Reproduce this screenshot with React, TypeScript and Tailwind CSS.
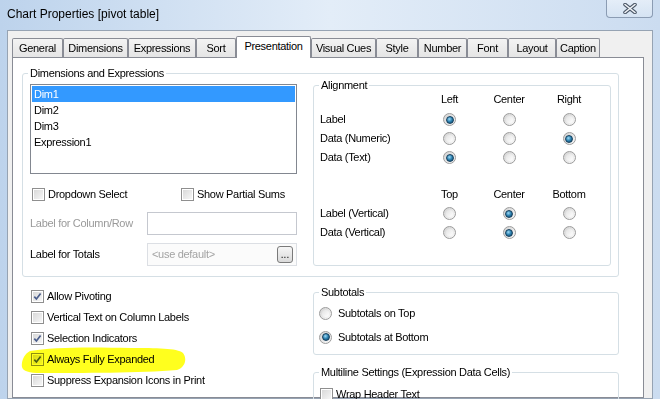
import type { ReactNode } from 'react';

const TABS: [string, number][] = [
  ['General', 51],
  ['Dimensions', 65],
  ['Expressions', 68],
  ['Sort', 40],
  ['Presentation', 75],
  ['Visual Cues', 65],
  ['Style', 42],
  ['Number', 49],
  ['Font', 41],
  ['Layout', 48],
  ['Caption', 44],
];

function Radio({ on }: { on?: boolean }) {
  return (
    <span className="w-[13px] h-[13px] rounded-full border border-[#9c9c9c] bg-linear-to-br from-[#d2d2d2] to-[#fbfbfb] flex items-center justify-center shrink-0">
      {on ? (
        <span className="w-[8px] h-[8px] rounded-full border border-[#163f5c] bg-[radial-gradient(circle_at_40%_35%,#9ddaf7,#2a7fae_50%,#0f3f60)]" />
      ) : (
        <span className="w-[7px] h-[7px] rounded-full bg-linear-to-br from-[#e2e2e2] to-[#ffffff]" />
      )}
    </span>
  );
}

function Check({ on }: { on?: boolean }) {
  return (
    <span className="w-[13px] h-[13px] border border-[#8f8f8f] bg-white p-[1px] flex shrink-0">
      <span className="flex-1 bg-linear-to-br from-[#d9d9d9] to-[#f6f6f6] flex items-center justify-center">
        {on && (
          <svg width="9" height="9" viewBox="0 0 9 9">
            <path d="M1.3 4.6 L3.4 7 L7.6 1.4" fill="none" stroke="#4b5e8c" strokeWidth="1.7" />
          </svg>
        )}
      </span>
    </span>
  );
}

function CheckLabel({ on, label, className = '' }: { on?: boolean; label: string; className?: string }) {
  return (
    <div className={`flex items-center gap-[3px] ${className}`}>
      <Check on={on} />
      <span className="relative">{label}</span>
    </div>
  );
}

function Group({ title, className, children }: { title: string; className: string; children?: ReactNode }) {
  return (
    <fieldset className={`border border-[#d5dfe5] rounded-[3px] ${className}`}>
      <legend className="ml-[5px] px-[2px] leading-[12px]">{title}</legend>
      {children}
    </fieldset>
  );
}

function CloseButton() {
  return (
    <div className="ml-auto mr-[7px] w-[47px] h-[18px] rounded-b-[4px] border border-t-0 border-[#8b9cb3] bg-linear-to-b from-[#eef4fb]/70 to-[#d9e6f4]/70 flex items-center justify-center">
      <svg width="14" height="11" viewBox="0 0 14 11">
        <path d="M2 1.5 L12 9.5 M12 1.5 L2 9.5" stroke="#4c5868" strokeWidth="3.6" strokeLinecap="round" />
        <path d="M2 1.5 L12 9.5 M12 1.5 L2 9.5" stroke="#f3f6fa" strokeWidth="1.6" strokeLinecap="round" />
      </svg>
    </div>
  );
}

const ALIGN_COLS = 'grid grid-cols-[106px_59px_60px_60px] items-center';

export default function App() {
  return (
    <div className="w-[660px] h-[399px] overflow-hidden flex flex-col bg-linear-to-r from-[#bdd3ec] via-[#e3edf8] to-[#cbdcf0] font-['Liberation_Sans',Arial,sans-serif] text-[11px] tracking-[-0.3px] text-black">
      {/* title bar */}
      <div className="h-[30px] shrink-0 flex items-start">
        <div className="pl-[7px] pt-[8px] text-[12px] leading-[12px] tracking-normal">Chart Properties [pivot table]</div>
        <CloseButton />
      </div>

      {/* client area */}
      <div className="flex-1 min-h-0 mx-[7px] border border-[#96a3b3] bg-[#f0f0f0] pt-[5px] pl-[4px] pr-[8px] flex flex-col">
        <div className="flex items-end shrink-0">
          {TABS.map(([name, w]) =>
            name === 'Presentation' ? (
              <div
                key={name}
                style={{ width: w }}
                className="h-[22px] -mb-px relative z-10 border border-b-0 border-[#898c95] rounded-t-[2px] bg-white flex items-center justify-center pb-[3px]"
              >
                {name}
              </div>
            ) : (
              <div
                key={name}
                style={{ width: w }}
                className="h-[19px] border border-b-0 border-[#898c95] rounded-t-[2px] bg-linear-to-b from-[#f3f3f3] to-[#e5e5e5] flex items-center justify-center"
              >
                {name}
              </div>
            )
          )}
        </div>

        <div className="flex-1 min-h-0 border border-[#898c95] bg-white">
          {/* Dimensions and Expressions */}
          <Group title="Dimensions and Expressions" className="ml-[9px] mt-[9px] w-[597px] h-[210px]">
            <div className="flex">
              <div className="ml-[7px] w-[267px]">
                <div className="mt-[5px] h-[90px] border border-[#828790] bg-white p-[1px]">
                  <div className="h-[16px] leading-[16px] px-[2px] bg-[#3399ff] text-white">Dim1</div>
                  <div className="h-[16px] leading-[16px] px-[2px]">Dim2</div>
                  <div className="h-[16px] leading-[16px] px-[2px]">Dim3</div>
                  <div className="h-[16px] leading-[16px] px-[2px]">Expression1</div>
                </div>

                <div className="mt-[14px] h-[13px] flex items-center pl-[2px]">
                  <CheckLabel label="Dropdown Select" className="w-[149px]" />
                  <CheckLabel label="Show Partial Sums" />
                </div>

                <div className="mt-[11px] h-[23px] flex items-center">
                  <span className="w-[117px] text-[#9a9a9a]">Label for Column/Row</span>
                  <div className="w-[150px] h-[23px] border border-[#c5c8cf] bg-white" />
                </div>

                <div className="mt-[8px] h-[23px] flex items-center">
                  <span className="w-[117px]">Label for Totals</span>
                  <div className="w-[150px] h-[23px] border border-[#dcdfe4] bg-[#fbfbfb] flex items-center pl-[4px] pr-[3px]">
                    <span className="flex-1 text-[#a3a3a3]">&lt;use default&gt;</span>
                    <div className="w-[16px] h-[17px] rounded-[3px] border border-[#7a7a7a] bg-linear-to-b from-[#f6f6f6] to-[#dadada] flex items-end justify-center leading-[10px] pb-[2px] text-[10px] tracking-normal">
                      ...
                    </div>
                  </div>
                </div>
              </div>

              <Group title="Alignment" className="ml-[16px] w-[298px] h-[187px]">
                <div className={`${ALIGN_COLS} h-[14px]`}>
                  <span />
                  <span className="text-center">Left</span>
                  <span className="text-center">Center</span>
                  <span className="text-center">Right</span>
                </div>
                <div className="mt-[5px]">
                  {[
                    ['Label', 0],
                    ['Data (Numeric)', 2],
                    ['Data (Text)', 0],
                  ].map(([label, sel]) => (
                    <div key={label} className={`${ALIGN_COLS} h-[19px]`}>
                      <span className="pl-[6px]">{label}</span>
                      {[0, 1, 2].map((i) => (
                        <span key={i} className="flex justify-center">
                          <Radio on={i === sel} />
                        </span>
                      ))}
                    </div>
                  ))}
                </div>

                <div className={`${ALIGN_COLS} h-[14px] mt-[19px]`}>
                  <span />
                  <span className="text-center">Top</span>
                  <span className="text-center">Center</span>
                  <span className="text-center">Bottom</span>
                </div>
                <div className="mt-[4px]">
                  {['Label (Vertical)', 'Data (Vertical)'].map((label) => (
                    <div key={label} className={`${ALIGN_COLS} h-[19px]`}>
                      <span className="pl-[6px]">{label}</span>
                      {[0, 1, 2].map((i) => (
                        <span key={i} className="flex justify-center">
                          <Radio on={i === 1} />
                        </span>
                      ))}
                    </div>
                  ))}
                </div>
              </Group>
            </div>
          </Group>

          {/* lower part */}
          <div className="flex">
            <div className="relative w-[300px] pl-[18px] pt-[9px]">
              <svg
                className="absolute left-[8px] top-[69px] mix-blend-multiply"
                width="166"
                height="28"
                viewBox="0 0 166 28"
              >
                <path
                  d="M9 5 C30 1 70 1 110 2 C135 2 156 2 162 7 C166 12 165 21 156 24 C120 27 60 27 20 27 C8 27 2 25 1 21 C0 16 3 8 9 5 Z"
                  fill="#ffff1e"
                />
              </svg>
              <CheckLabel on label="Allow Pivoting" className="h-[21px]" />
              <CheckLabel label="Vertical Text on Column Labels" className="h-[21px]" />
              <CheckLabel on label="Selection Indicators" className="h-[21px]" />
              <CheckLabel on label="Always Fully Expanded" className="h-[21px]" />
              <CheckLabel label="Suppress Expansion Icons in Print" className="h-[21px]" />
            </div>

            <div className="pt-[9px]">
              <Group title="Subtotals" className="w-[306px] h-[69px]">
                <div className="pl-[5px] pt-[3px]">
                  <div className="h-[24px] flex items-center gap-[6px]">
                    <Radio />
                    <span>Subtotals on Top</span>
                  </div>
                  <div className="h-[24px] flex items-center gap-[6px]">
                    <Radio on />
                    <span>Subtotals at Bottom</span>
                  </div>
                </div>
              </Group>
              <Group title="Multiline Settings (Expression Data Cells)" className="mt-[11px] w-[306px] h-[80px]">
                <div className="pl-[6px] pt-[10px]">
                  <CheckLabel label="Wrap Header Text" className="h-[13px]" />
                </div>
              </Group>
            </div>
          </div>
        </div>
      </div>
    </div>
  );
}
